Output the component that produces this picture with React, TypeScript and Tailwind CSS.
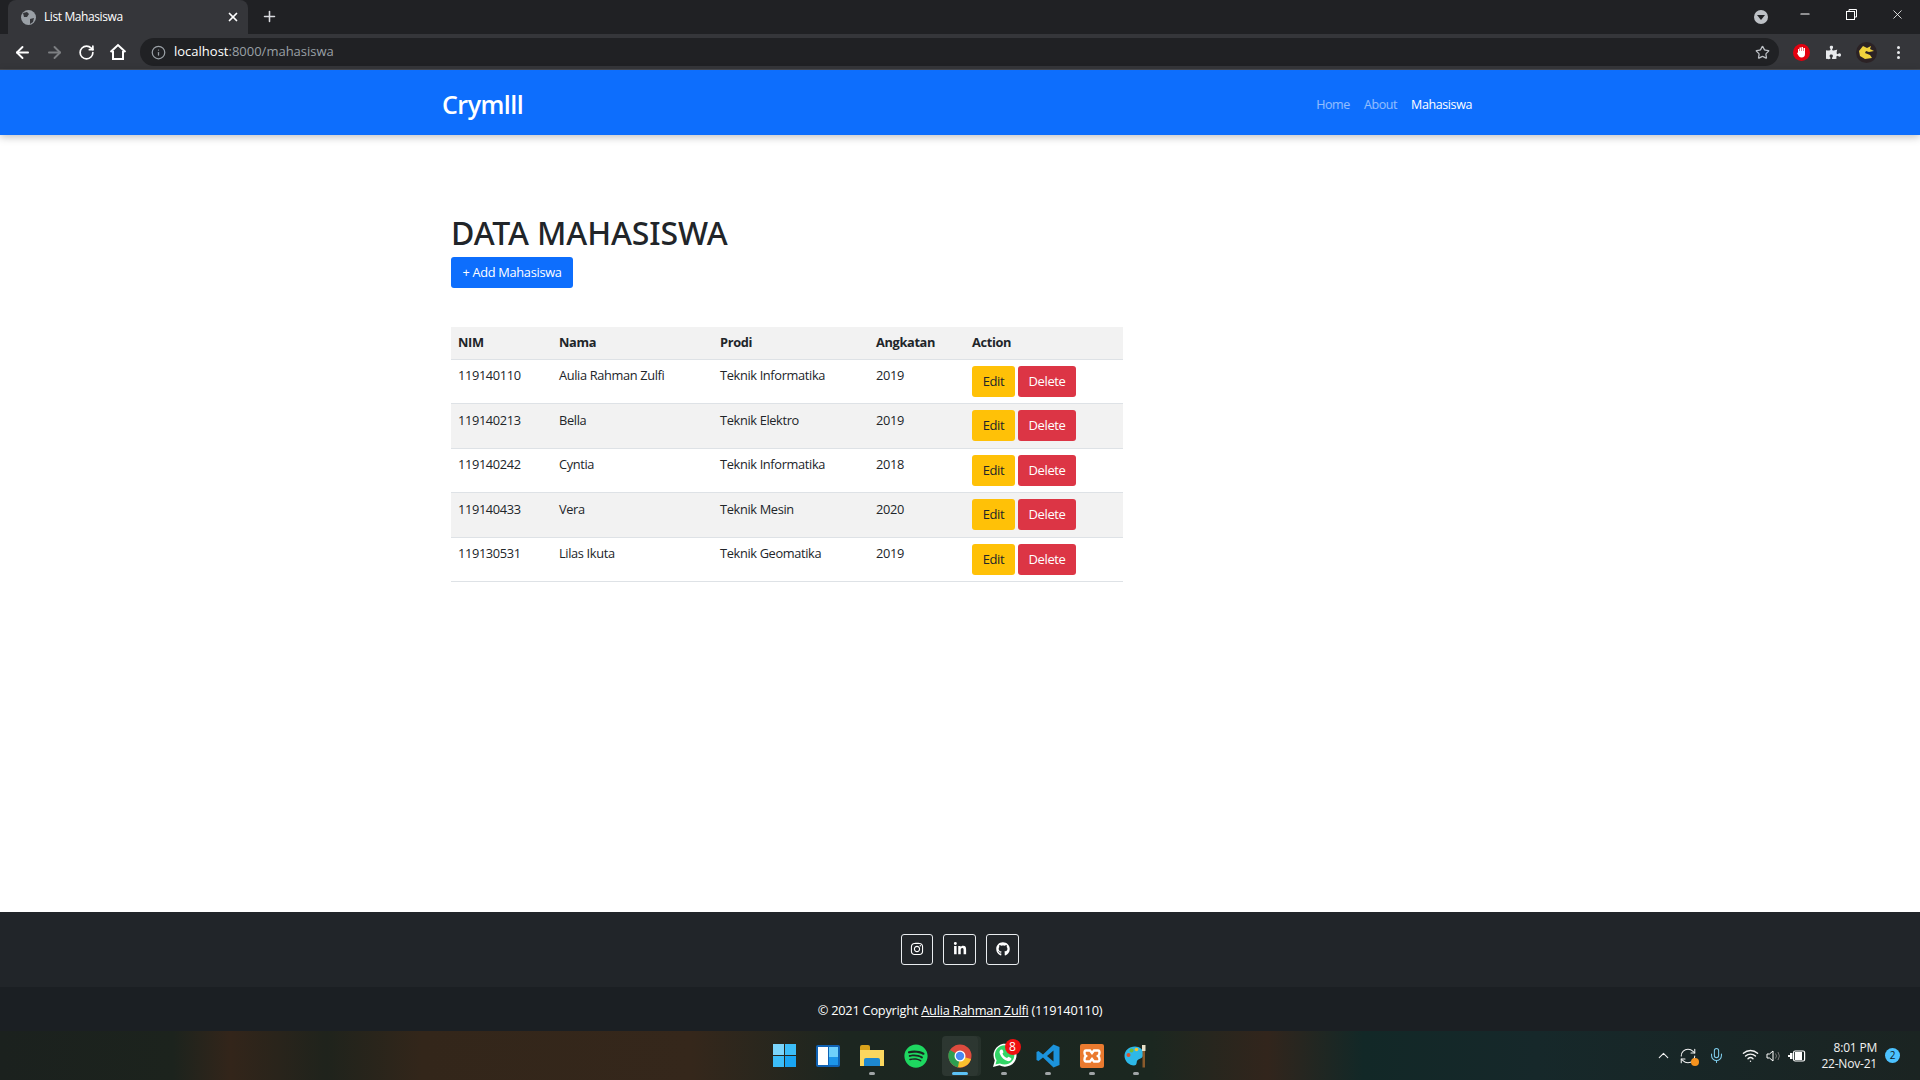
import { FaGithub, FaInstagram, FaLinkedinIn, FaSpotify, FaPuzzlePiece } from "react-icons/fa";
import { ArrowLeft, ArrowRight, RotateCw, Info, Star, Plus, X, Minus, ChevronUp, Mic, Wifi, RefreshCw } from "lucide-react";

const students = [
  { nim: "119140110", nama: "Aulia Rahman Zulfi", prodi: "Teknik Informatika", angkatan: "2019" },
  { nim: "119140213", nama: "Bella", prodi: "Teknik Elektro", angkatan: "2019" },
  { nim: "119140242", nama: "Cyntia", prodi: "Teknik Informatika", angkatan: "2018" },
  { nim: "119140433", nama: "Vera", prodi: "Teknik Mesin", angkatan: "2020" },
  { nim: "119130531", nama: "Lilas Ikuta", prodi: "Teknik Geomatika", angkatan: "2019" },
];

const BrowserChrome = () => (
  <div className="shrink-0 font-['Open_Sans',sans-serif]">
    <div className="h-[34px] bg-[#202124] flex items-start pl-2">
      <div className="w-[240px] h-[34px] bg-[#35363a] rounded-t-lg flex items-center pl-[13px] pr-[8px] text-white">
        <svg width="15" height="15" viewBox="0 0 15 15" className="shrink-0">
          <circle cx="7.5" cy="7.5" r="7.5" fill="#9aa0a6" />
          <path d="M2 3 L6 2 L8 4 L6 7 L3 7 Z M9 9 L13 8 L12 12 L9 14 Z" fill="#35363a" />
        </svg>
        <span className="ml-[8px] flex-1 text-[12px] tracking-[-0.4px]">List Mahasiswa</span>
        <X size={14} strokeWidth={3} />
      </div>
      <Plus size={17} strokeWidth={2.2} className="text-[#dadce0] ml-[13px] mt-[8px]" />
      <div className="ml-auto flex items-start text-white">
        <div className="w-[14px] h-[14px] mt-[10px] rounded-full bg-[#bdc1c6] flex items-center justify-center">
          <div className="w-0 h-0 border-x-[4px] border-x-transparent border-t-[5px] border-t-[#202124]" />
        </div>
        <Minus size={14} className="ml-[30px] mt-[7px]" />
        <svg width="11" height="11" viewBox="0 0 11 11" fill="none" stroke="white" className="ml-[34px] mt-[9px]">
          <rect x="0.5" y="2.5" width="8" height="8" />
          <path d="M3 2.5V0.5H10.5V8H8.5" />
        </svg>
        <X size={15} strokeWidth={1.3} className="ml-[33px] mr-[15px] mt-[7px]" />
      </div>
    </div>
    <div className="h-[36px] bg-[#35363a] flex items-center pl-[13px] pt-[1px] text-white border-b border-[#4d4e52]">
      <ArrowLeft size={19} strokeWidth={2.4} />
      <ArrowRight size={19} strokeWidth={2.4} className="text-[#7d7f82] ml-[13px]" />
      <RotateCw size={17} strokeWidth={2.4} className="ml-[14px]" />
      <svg width="18" height="18" viewBox="0 0 18 18" fill="none" stroke="white" strokeWidth="2" className="ml-[14px]">
        <path d="M1.500 9 L9 2 L16.500 9 M4 8 V16 H14 V8" />
      </svg>
      <div className="ml-[13px] h-[28px] w-[1639px] shrink-0 rounded-full bg-[#202124] flex items-center pl-[11px] pr-[9px] text-[13px]">
        <Info size={15} className="text-[#9aa0a6]" />
        <span className="ml-[8px] text-white">localhost</span>
        <span className="text-[#9aa0a6]">:8000/mahasiswa</span>
        <Star size={15} className="ml-auto text-[#bdc1c6]" />
      </div>
      <div className="ml-[14px] w-[17px] h-[17px] rounded-full bg-[#e3000f] flex items-center justify-center">
        <svg width="11" height="12" viewBox="0 0 11 12" fill="white">
          <path d="M2 3 H3 V5 H3.500 V1.500 H5 V5 H5.500 V1 H7 V5 H7.500 V2 H9 V8 C9 10 8 11.500 5.500 11.500 C3.500 11.500 2.500 10 1 7 L2 6.500 Z" />
        </svg>
      </div>
      <FaPuzzlePiece size={15} className="ml-[16px] text-[#e8eaed]" />
      <div className="ml-[15px] w-[21px] h-[21px] rounded-full bg-[#2b2225] flex items-center justify-center">
        <svg width="17" height="15" viewBox="0 0 17 15" fill="#f0d23c">
          <path d="M5 1 L9 3 L13 1 L12 4 L16 6 L11 7 L8 6 L7 8 L12 10 L14 13 L7 14 L2 11 L1 6 Z" />
        </svg>
      </div>
      <div className="ml-[20px] flex flex-col gap-[2px]">
        <div className="w-[3px] h-[3px] rounded-full bg-[#e8eaed]" />
        <div className="w-[3px] h-[3px] rounded-full bg-[#e8eaed]" />
        <div className="w-[3px] h-[3px] rounded-full bg-[#e8eaed]" />
      </div>
    </div>
  </div>
);

const Navbar = () => (
  <nav className="shrink-0 h-[65px] bg-[#0d6efd] shadow-[0_2px_8px_rgba(0,0,0,0.25)] relative flex items-center pl-[442px] pr-[448px] pt-[4px]">
    <a className="text-[25px] font-semibold text-white tracking-[-0.5px]">Crymlll</a>
    <div className="ml-auto mt-[1px] flex items-center gap-[14px] text-[12.5px] tracking-[-0.4px]">
      <a className="text-white/55">Home</a>
      <a className="text-white/55">About</a>
      <a className="text-white">Mahasiswa</a>
    </div>
  </nav>
);

const ActionButtons = () => (
  <div className="flex gap-[3px]">
    <button className="h-[31px] w-[43px] rounded-[3px] bg-[#ffc107] text-[#212529] text-[13px]">Edit</button>
    <button className="h-[31px] w-[58px] rounded-[3px] bg-[#dc3545] text-white text-[13px]">Delete</button>
  </div>
);

const MahasiswaTable = () => (
  <table className="w-[672px] table-fixed border-collapse mt-[39px] text-[12.8px] text-[#212529] tracking-[-0.35px]">
    <thead>
      <tr className="h-[32px] bg-[#f2f2f2] border-b border-[#dee2e6] text-left">
        <th className="w-[101px] pl-[7px] font-bold">NIM</th>
        <th className="w-[161px] pl-[7px] font-bold">Nama</th>
        <th className="w-[156px] pl-[7px] font-bold">Prodi</th>
        <th className="w-[96px] pl-[7px] font-bold">Angkatan</th>
        <th className="pl-[7px] font-bold">Action</th>
      </tr>
    </thead>
    <tbody>
      {students.map((s, index) => (
        <tr key={s.nim} className={`h-[44.5px] border-b border-[#dee2e6] ${index % 2 === 1 ? "bg-[#f2f2f2]" : "bg-white"}`}>
          <td className="pl-[7px] pt-[6.5px] align-top">{s.nim}</td>
          <td className="pl-[7px] pt-[6.5px] align-top">{s.nama}</td>
          <td className="pl-[7px] pt-[6.5px] align-top">{s.prodi}</td>
          <td className="pl-[7px] pt-[6.5px] align-top">{s.angkatan}</td>
          <td className="pl-[7px] align-middle"><ActionButtons /></td>
        </tr>
      ))}
    </tbody>
  </table>
);

const Footer = () => (
  <footer className="shrink-0 text-white">
    <div className="h-[75px] bg-[#212529] flex items-center justify-center gap-[10px] pb-[1px]">
      <div className="w-[32px] h-[31px] border border-[#e9ecef] rounded-[3px] flex items-center justify-center"><FaInstagram size={14} /></div>
      <div className="w-[33px] h-[31px] border border-[#e9ecef] rounded-[3px] flex items-center justify-center"><FaLinkedinIn size={14} /></div>
      <div className="w-[33px] h-[31px] border border-[#e9ecef] rounded-[3px] flex items-center justify-center"><FaGithub size={14} /></div>
    </div>
    <div className="h-[44px] bg-[#1b1f23] flex items-center justify-center pt-[3px] text-[12.8px] tracking-[-0.25px]">
      <span>© 2021 Copyright <a className="underline">Aulia Rahman Zulfi</a> (119140110)</span>
    </div>
  </footer>
);

const TaskIcon = ({ children, dot, active }: { children: React.ReactNode; dot?: boolean; active?: boolean }) => (
  <div className="relative w-[36px] h-[40px] flex items-center justify-center mx-[4px]">
    {active && <div className="absolute inset-0 rounded-[4px] bg-white/8 shadow-[3px_0_0_rgba(255,255,255,0.05)]" />}
    <div className="relative flex items-center justify-center">{children}</div>
    {dot && <div className="absolute bottom-[1px] left-[15px] w-[6px] h-[3px] rounded-full bg-[#a0a4a6]" />}
    {active && <div className="absolute bottom-[1px] left-[10px] w-[16px] h-[3px] rounded-full bg-[#5cc3f5]" />}
  </div>
);

const Taskbar = () => (
  <div className="shrink-0 h-[49px] flex items-center bg-[linear-gradient(90deg,#1b211e_0%,#1c231d_9%,#33251a_12%,#1f231c_17%,#33261a_22%,#35271b_36%,#1c2620_44%,#1b2720_60%,#32251c_66%,#122827_71%,#16282a_80%,#1b2422_100%)]">
    <div className="w-[762px] shrink-0" />
    <div className="flex items-center">
      <TaskIcon>
        <div className="grid grid-cols-2 gap-[1px] w-[23px] h-[23px]">
          <div className="bg-[#7bd5fb]" /><div className="bg-[#3cbdf8]" /><div className="bg-[#3cbdf8]" /><div className="bg-[#19a5f3]" />
        </div>
      </TaskIcon>
      <TaskIcon>
        <div className="w-[24px] h-[22px] rounded-[2px] bg-[#0f62b4] flex gap-[1px] p-[2px]">
          <div className="w-[10px] bg-white" />
          <div className="flex-1 flex flex-col"><div className="h-[10px] bg-[#6fd0fb]" /><div className="flex-1 bg-[#1d96ea]" /></div>
        </div>
      </TaskIcon>
      <TaskIcon dot>
        <div className="relative w-[24px] h-[21px]">
          <div className="w-[10px] h-[5px] rounded-t-[2px] bg-[#d9a21b]" />
          <div className="w-full h-[16px] bg-[#fbd75f]" />
          <div className="absolute bottom-0 left-[4px] w-[16px] h-[8px] rounded-t-[2px] bg-[#1e88d0]" />
        </div>
      </TaskIcon>
      <TaskIcon><FaSpotify size={24} className="text-[#1ed760]" /></TaskIcon>
      <TaskIcon active>
        <svg width="24" height="24" viewBox="0 0 24 24">
          <circle cx="12" cy="12" r="11.500" fill="#dd4b3e" />
          <path d="M12 12 L23 15 A11.500 11.500 0 0 1 9 23 Z" fill="#fbc02d" />
          <path d="M12 12 L10 23.300 A11.500 11.500 0 0 1 2 6 Z" fill="#2e9e50" />
          <circle cx="12" cy="12" r="5.500" fill="white" />
          <circle cx="12" cy="12" r="4.200" fill="#4a8af4" />
        </svg>
      </TaskIcon>
      <TaskIcon dot>
        <svg width="25" height="25" viewBox="0 0 25 25">
          <path d="M1 24 L2.800 17.500 A11.500 11.500 0 1 1 7.500 22.300 Z" fill="white" />
          <path d="M3.500 21.500 L4.600 17.300 A9.700 9.700 0 1 1 8 20.400 Z" fill="#32d566" />
          <path d="M9 6.500 C7.500 7.500 7 9 8 11 C9.500 14.500 12 17 15.500 18 C17.500 18.500 19 17.500 19.500 16 L19 15 L16.500 13.800 L15 15 C13 14.500 11 12.500 10.500 10.500 L11.500 9.200 L10.500 6.800 Z" fill="white" />
        </svg>
        <div className="absolute top-[-4px] right-[-4px] w-[16px] h-[16px] rounded-full bg-[#f01010] text-white text-[12px] leading-[16px] text-center">8</div>
      </TaskIcon>
      <TaskIcon dot>
        <svg width="24" height="24" viewBox="0 0 24 24">
          <path d="M17.500 0.500 L23.500 3 V21 L17.500 23.500 L7 13.500 L2.500 17 L0.500 16 V8 L2.500 7 L7 10.500 Z M17.500 6.500 L11 12 L17.500 17.500 Z" fill="#1c93dc" fillRule="evenodd" />
        </svg>
      </TaskIcon>
      <TaskIcon dot>
        <div className="w-[24px] h-[24px] rounded-[2px] bg-[#ea7a2f] flex items-center justify-center">
          <svg width="18" height="14" viewBox="0 0 18 14" fill="none" stroke="white" strokeWidth="2.400">
            <path d="M3 1.500 H7 L9 4 L11 1.500 H15 C17 1.500 17 5.500 15 7 C17 8.500 17 12.500 15 12.500 H11 L9 10 L7 12.500 H3 C1 12.500 1 8.500 3 7 C1 5.500 1 1.500 3 1.500 Z" />
          </svg>
        </div>
      </TaskIcon>
      <TaskIcon dot>
        <svg width="24" height="24" viewBox="0 0 24 24">
          <path d="M11 2.500 C5 2.500 0.500 6.500 0.500 12 C0.500 17 5 21.500 10 21.500 C13 21.500 12.500 18.500 13 17 C14 14.500 19 15 19.500 10.500 C20 6 15.500 2.500 11 2.500 Z" fill="#2db8e8" />
          <circle cx="4.500" cy="11" r="2" fill="#d9512c" />
          <circle cx="7.500" cy="6.500" r="2" fill="#6fbb3a" />
          <circle cx="12.500" cy="5.500" r="1.800" fill="#f2c230" />
          <rect x="18.500" y="7" width="2.500" height="16.500" fill="#8a5a2b" />
          <rect x="18" y="1" width="3.500" height="6" fill="#e8e0c8" />
        </svg>
      </TaskIcon>
    </div>
    <div className="flex-1 flex items-center justify-end text-[#f2f2f2] pr-[20px]">
      <ChevronUp size={17} strokeWidth={1.500} />
      <div className="relative ml-[7px]">
        <RefreshCw size={18} strokeWidth={1.400} />
        <div className="absolute right-[-2px] bottom-[-1px] w-[8px] h-[8px] rounded-full bg-[#f7931e]" />
      </div>
      <Mic size={17} strokeWidth={1.500} className="ml-[11px] text-[#7ecbea]" />
      <Wifi size={17} strokeWidth={2} className="ml-[17px]" />
      <svg width="17" height="14" viewBox="0 0 17 14" fill="none" stroke="white" className="ml-[7px]">
        <path d="M1 5 H3.500 L7 2 V12 L3.500 9 H1 Z" />
        <path d="M9.500 4.500 A4 4 0 0 1 9.500 9.500 M12 3 A7 7 0 0 1 12 11" stroke="#777" />
      </svg>
      <svg width="18" height="12" viewBox="0 0 18 12" className="ml-[5px]" fill="white">
        <rect x="5.600" y="1" width="11" height="10" rx="1.500" fill="none" stroke="white" strokeWidth="1.200" />
        <rect x="7" y="2" width="7" height="8" />
        <path d="M0 5 H2 V3 H4.500 V9 H2 V7 H0 Z" />
      </svg>
      <div className="ml-[15px] text-right text-[12px] leading-[15.500px] tracking-[-0.2px]">
        <div>8:01 PM</div>
        <div>22-Nov-21</div>
      </div>
      <div className="ml-[8px] w-[15px] h-[15px] rounded-full bg-[#4cc2ff] text-[#10181c] text-[10px] leading-[15px] text-center">2</div>
    </div>
  </div>
);

const App = () => {
  return (
    <div className="h-screen flex flex-col bg-white font-['Open_Sans',sans-serif]">
      <BrowserChrome />
      <Navbar />
      <main className="flex-1 pl-[451px] pt-[76px]">
        <h1 className="text-[32px] leading-[44px] font-medium font-['Noto_Sans',sans-serif] text-[#212529] tracking-[-0.1px]">DATA MAHASISWA</h1>
        <button className="block h-[31px] w-[122px] mt-[2px] pt-[1px] rounded-[3px] bg-[#0d6efd] text-white text-[12.8px] tracking-[-0.3px]">+ Add Mahasiswa</button>
        <MahasiswaTable />
      </main>
      <Footer />
      <Taskbar />
    </div>
  );
};

export default App;
